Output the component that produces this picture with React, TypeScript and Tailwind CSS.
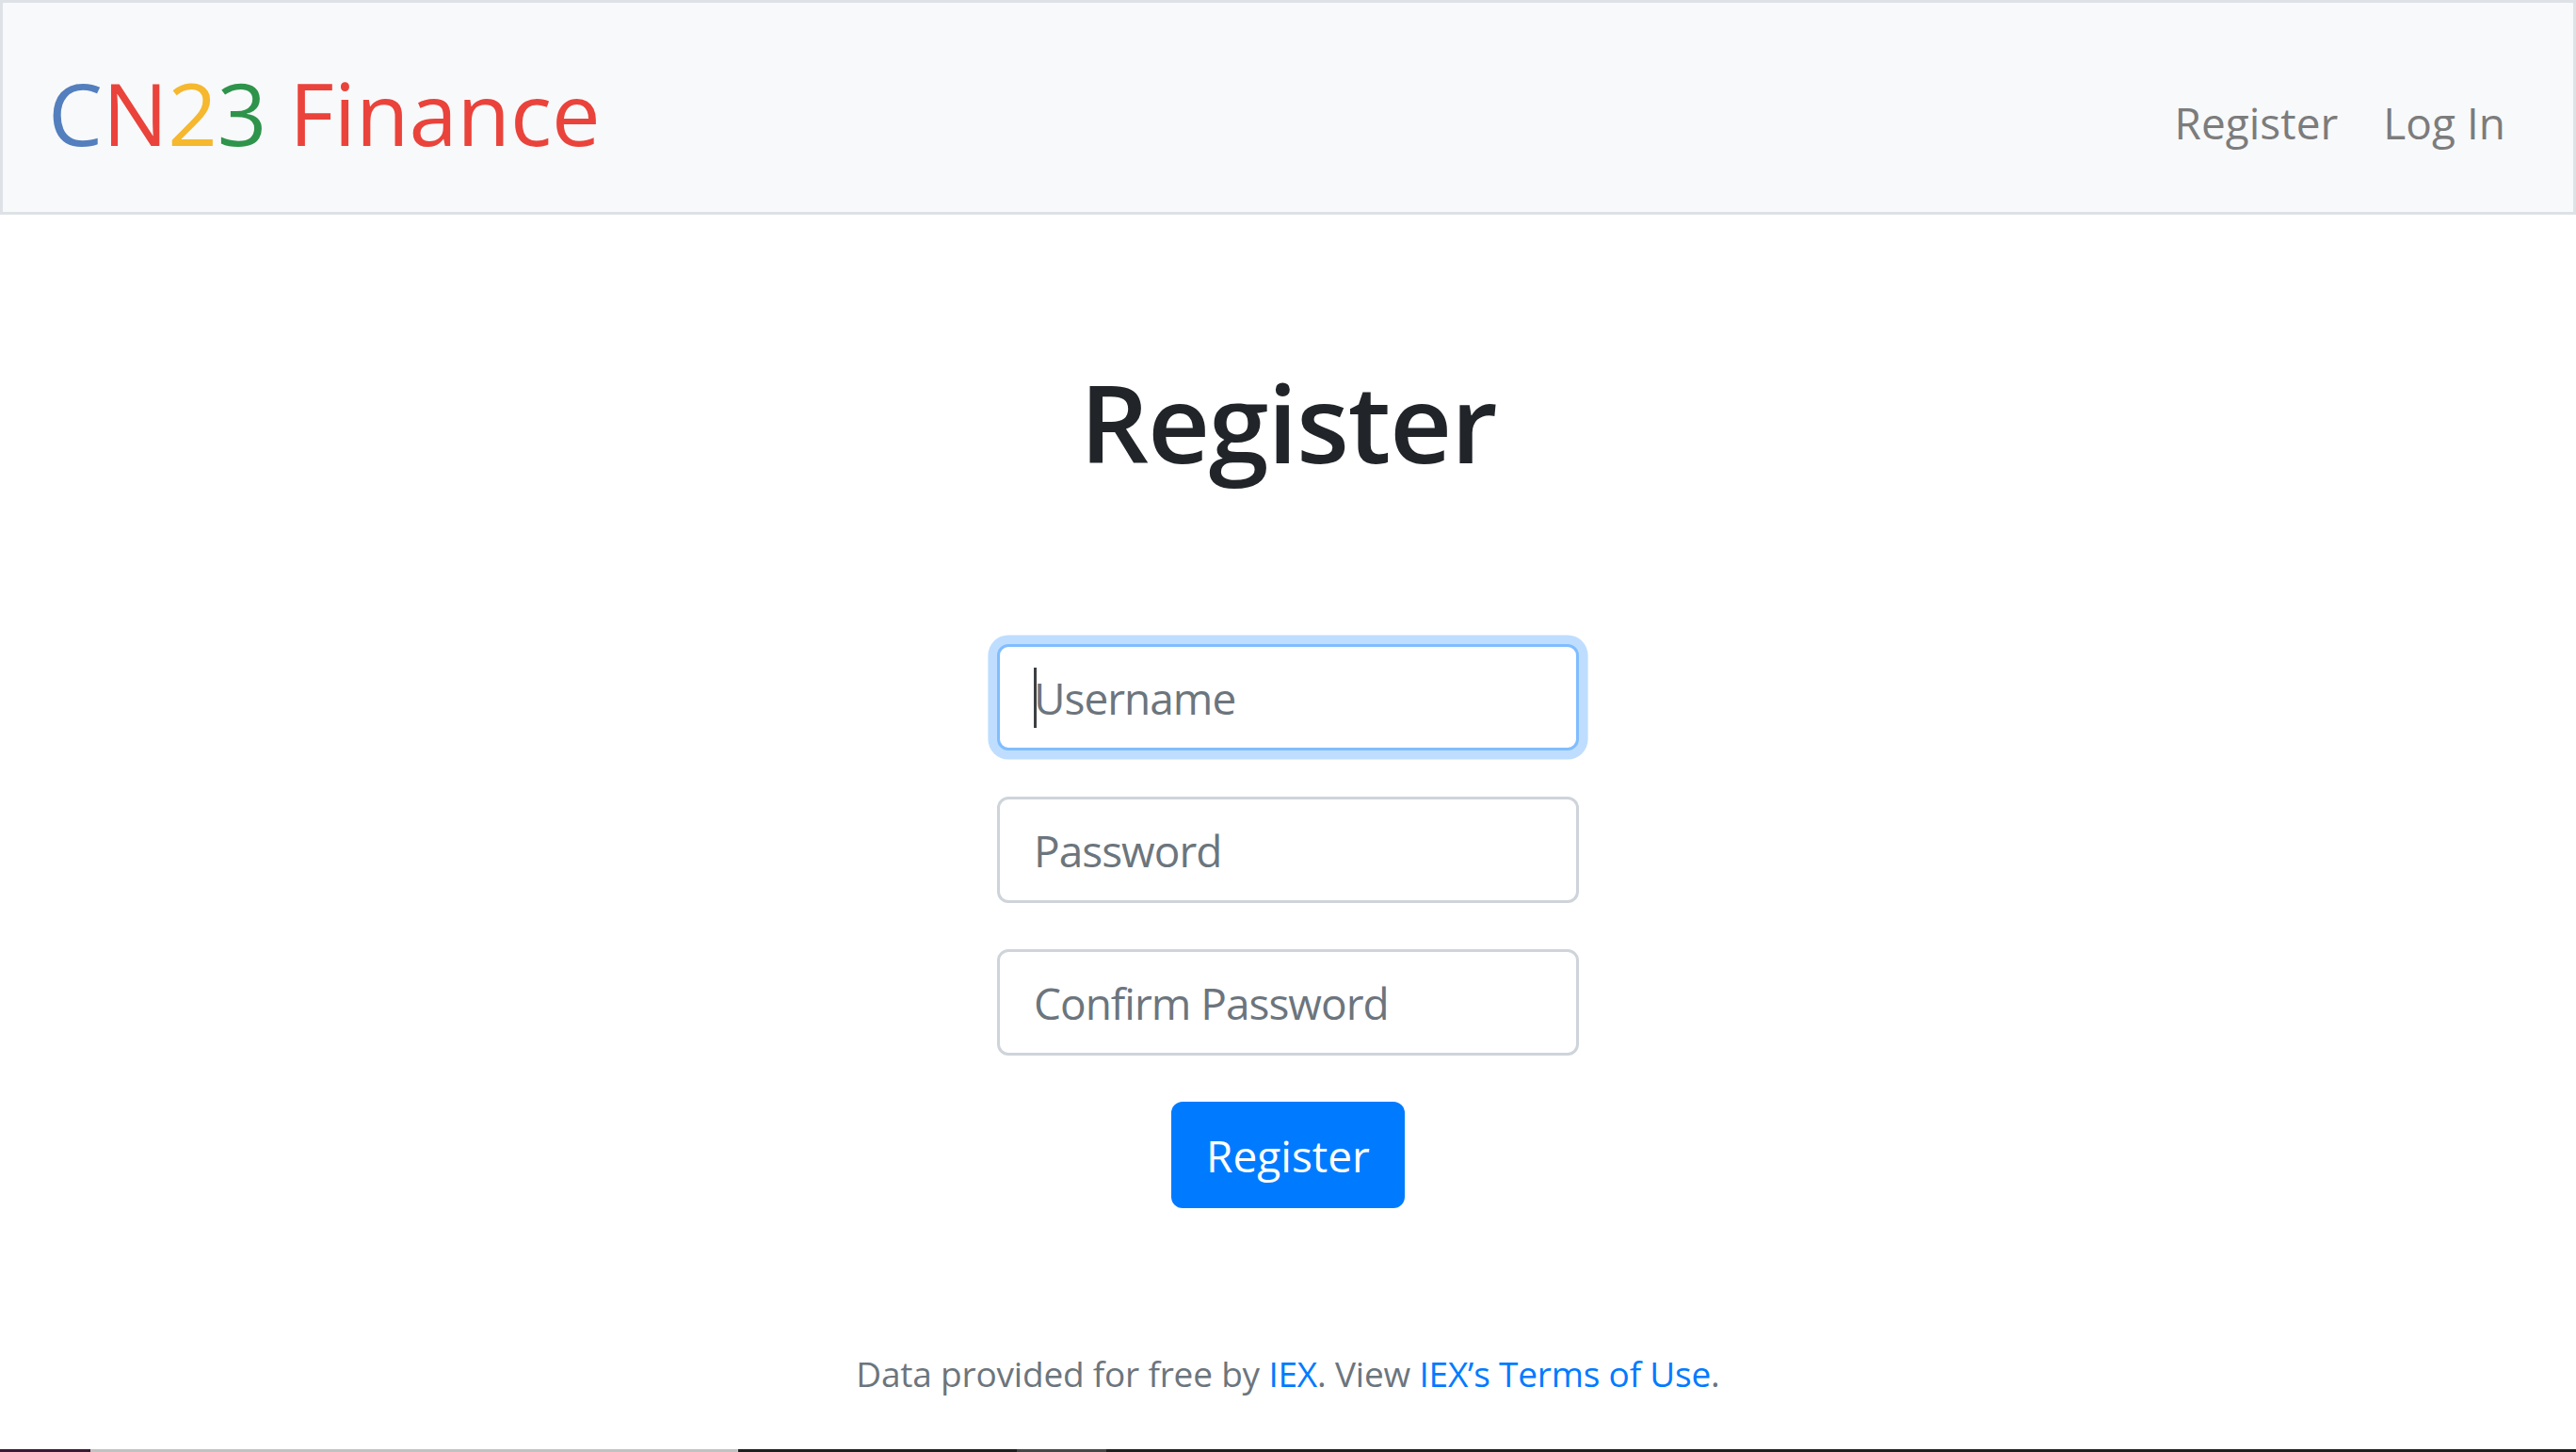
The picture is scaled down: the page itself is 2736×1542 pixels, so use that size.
export default function App() {
  return (
    <div className="h-[1542px] w-full flex flex-col bg-white font-['Open_Sans',sans-serif] overflow-hidden">
      <nav className="h-[228px] shrink-0 border-[3px] border-[#dee2e6] bg-[#f8f9fa] flex items-start justify-between">
        <a className="pl-[48px] pt-[45px] text-[92px] leading-[144px] whitespace-nowrap">
          <span className="text-[#537fbe]">C</span>
          <span className="text-[#ea433b]">N</span>
          <span className="text-[#f5b82e]">2</span>
          <span className="text-[#2e944b]">3</span>
          <span className="text-[#ea433b]"> Finance</span>
        </a>
        <ul className="flex pr-[48px] pt-[91px] text-[46px] leading-[72px] text-[#7c7c7d]">
          <li className="px-[24px]">Register</li>
          <li className="px-[24px]">Log In</li>
        </ul>
      </nav>
      <main className="flex flex-col items-center pt-[148px]">
        <h1 className="text-[115px] font-semibold leading-[144px] tracking-[-1.3px] text-[#212529]">Register</h1>
        <form className="mt-[164px] flex flex-col items-center gap-[49px]">
          <div className="relative">
            <input
              className="w-[618px] h-[113px] rounded-[12px] border-[3px] border-[#80bdff] bg-white px-[36px] text-[46px] tracking-[-1px] text-[#495057] outline-none shadow-[0_0_0_9.6px_rgba(0,123,255,0.25)] placeholder:text-[#6c757d]"
              placeholder="Username"
              type="text"
            />
            <span className="absolute left-[39px] top-[25px] h-[64px] w-[3px] bg-[#3c4043]" />
          </div>
          <input
            className="w-[618px] h-[113px] rounded-[12px] border-[3px] border-[#ced4da] bg-white px-[36px] text-[46px] tracking-[-1px] text-[#495057] outline-none placeholder:text-[#6c757d]"
            placeholder="Password"
            type="password"
          />
          <input
            className="w-[618px] h-[113px] rounded-[12px] border-[3px] border-[#ced4da] bg-white px-[36px] text-[46px] tracking-[-1px] text-[#495057] outline-none placeholder:text-[#6c757d]"
            placeholder="Confirm Password"
            type="password"
          />
          <button
            type="button"
            className="w-[248px] h-[113px] rounded-[12px] bg-[#007bff] text-white text-[46px] leading-[72px]"
          >
            Register
          </button>
        </form>
      </main>
      <footer className="mt-[147px] text-center text-[37px] tracking-[-0.2px] leading-[57.6px] text-[#6c757d]">
        Data provided for free by <span className="text-[#007bff]">IEX</span>. View{" "}
        <span className="text-[#007bff]">IEX’s Terms of Use</span>.
      </footer>
      <div className="flex-1" />
      <div className="h-[3px] shrink-0 flex">
        <div className="w-[96px] bg-[#3b1a33]" />
        <div className="w-[688px] bg-[#c2c2c2]" />
        <div className="w-[296px] bg-[#1f1f1f]" />
        <div className="w-[95px] bg-[#474747]" />
        <div className="flex-1 bg-[#1f1f1f]" />
      </div>
    </div>
  );
}
